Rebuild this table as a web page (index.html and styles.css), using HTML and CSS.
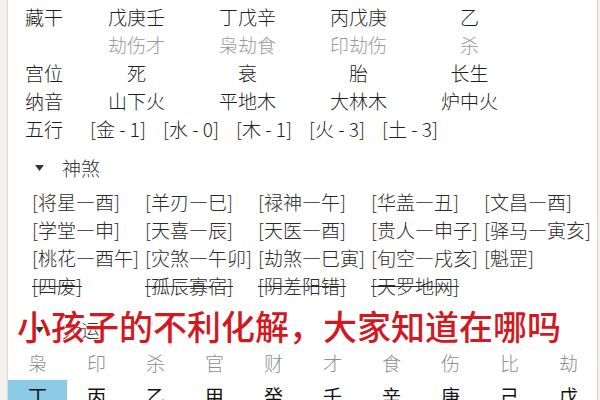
FILE: index.html
```html
<!DOCTYPE html>
<html lang="zh-CN">
<head>
<meta charset="utf-8">
<title>八字</title>
<link rel="stylesheet" href="styles.css">
</head>
<body>
<div class="page">
  <div class="table">
    <div class="label">藏干</div><div class="cell">戊庚壬</div><div class="cell">丁戊辛</div><div class="cell">丙戊庚</div><div class="cell">乙</div>
    <div class="label"></div><div class="cell muted">劫伤才</div><div class="cell muted">枭劫食</div><div class="cell muted">印劫伤</div><div class="cell muted">杀</div>
    <div class="label">宫位</div><div class="cell">死</div><div class="cell">衰</div><div class="cell">胎</div><div class="cell">长生</div>
    <div class="label">纳音</div><div class="cell">山下火</div><div class="cell">平地木</div><div class="cell">大林木</div><div class="cell">炉中火</div>
    <div class="label">五行</div>
    <div class="wuxing"><span>[金 - 1]</span><span>[水 - 0]</span><span>[木 - 1]</span><span>[火 - 3]</span><span>[土 - 3]</span></div>
  </div>

  <div class="section-head">
    <svg class="caret" width="9" height="6" viewBox="0 0 9 6"><polygon points="0,0 9,0 4.5,6" fill="#333"/></svg>
    <span>神煞</span>
  </div>
  <div class="shensha">
    <span>[将星—酉]</span><span>[羊刃—巳]</span><span>[禄神—午]</span><span>[华盖—丑]</span><span>[文昌—酉]</span>
    <span>[学堂—申]</span><span>[天喜—辰]</span><span>[天医—酉]</span><span>[贵人—申子]</span><span>[驿马—寅亥]</span>
    <span>[桃花—酉午]</span><span>[灾煞—午卯]</span><span>[劫煞—巳寅]</span><span>[旬空—戌亥]</span><span>[魁罡]</span>
    <span class="del">[四废]</span><span class="del">[孤辰寡宿]</span><span class="del">[阴差阳错]</span><span class="del">[天罗地网]</span>
  </div>

  <div class="section-head dayun">
    <svg class="caret" width="9" height="6" viewBox="0 0 9 6"><polygon points="0,0 9,0 4.5,6" fill="#333"/></svg>
    <span>大运</span>
  </div>
  <div class="gods">
    <span>枭</span><span>印</span><span>杀</span><span>官</span><span>财</span><span>才</span><span>食</span><span>伤</span><span>比</span><span>劫</span>
  </div>
  <div class="stems">
    <span class="active">丁</span><span>丙</span><span>乙</span><span>甲</span><span>癸</span><span>壬</span><span>辛</span><span>庚</span><span>己</span><span>戊</span>
  </div>

  <div class="caption">小孩子的不利化解，大家知道在哪吗</div>
</div>
</body>
</html>
```

FILE: styles.css
```css
html, body {
  margin: 0;
  padding: 0;
  height: 400px;
  overflow: hidden;
  background: #f3f2ef;
}
body {
  font-family: "Noto Sans CJK SC", "Noto Sans", sans-serif;
  font-weight: 300;
  color: #1f1f1f;
  font-size: 19px;
}
.page {
  position: relative;
  margin-left: 7px;
  width: 589px;
  min-height: 400px;
  background: #fff;
  border-left: 1px solid #dcdcdc;
  border-right: 1px solid #d6d6d6;
  padding-top: 3px;
  box-sizing: content-box;
}
.table {
  display: grid;
  grid-template-columns: 56px repeat(4, 111px);
  padding-left: 17px;
  line-height: 28px;
}
.label { color: #1a1a1a; }
.cell { text-align: center; color: #1f1f1f; }
.muted { color: #9a9a9a; }
.wuxing {
  grid-column: 2 / span 4;
  display: flex;
  gap: 16px;
  margin-left: 9px;
  white-space: pre;
}
.wuxing span { width: 57px; white-space: nowrap; }
.section-head {
  display: flex;
  align-items: center;
  gap: 18px;
  padding-left: 27px;
  margin-top: 11px;
  line-height: 28px;
  color: #333;
}
.shensha {
  display: grid;
  grid-template-columns: repeat(5, 113px);
  padding-left: 24px;
  margin-top: 6px;
  line-height: 28px;
  color: #2a2a2a;
}
.shensha span { white-space: nowrap; }
.del { text-decoration: line-through; }
.dayun { margin-top: 16px; }
.gods {
  display: grid;
  grid-template-columns: repeat(10, 59px);
  margin-top: 5px;
  line-height: 28px;
  color: #8e8e8e;
  text-align: center;
}
.stems {
  display: grid;
  grid-template-columns: repeat(10, 59px);
  margin-top: 3px;
  line-height: 32px;
  color: #111;
  font-weight: 400;
  text-align: center;
}
.stems .active { background: #8ccbe6; }
.caption {
  position: absolute;
  left: 9px;
  top: 306px;
  font-size: 34px;
  line-height: 40px;
  font-weight: 500;
  color: #d3181f;
  white-space: nowrap;
  text-shadow: 0 0 2px #fff;
}
```
